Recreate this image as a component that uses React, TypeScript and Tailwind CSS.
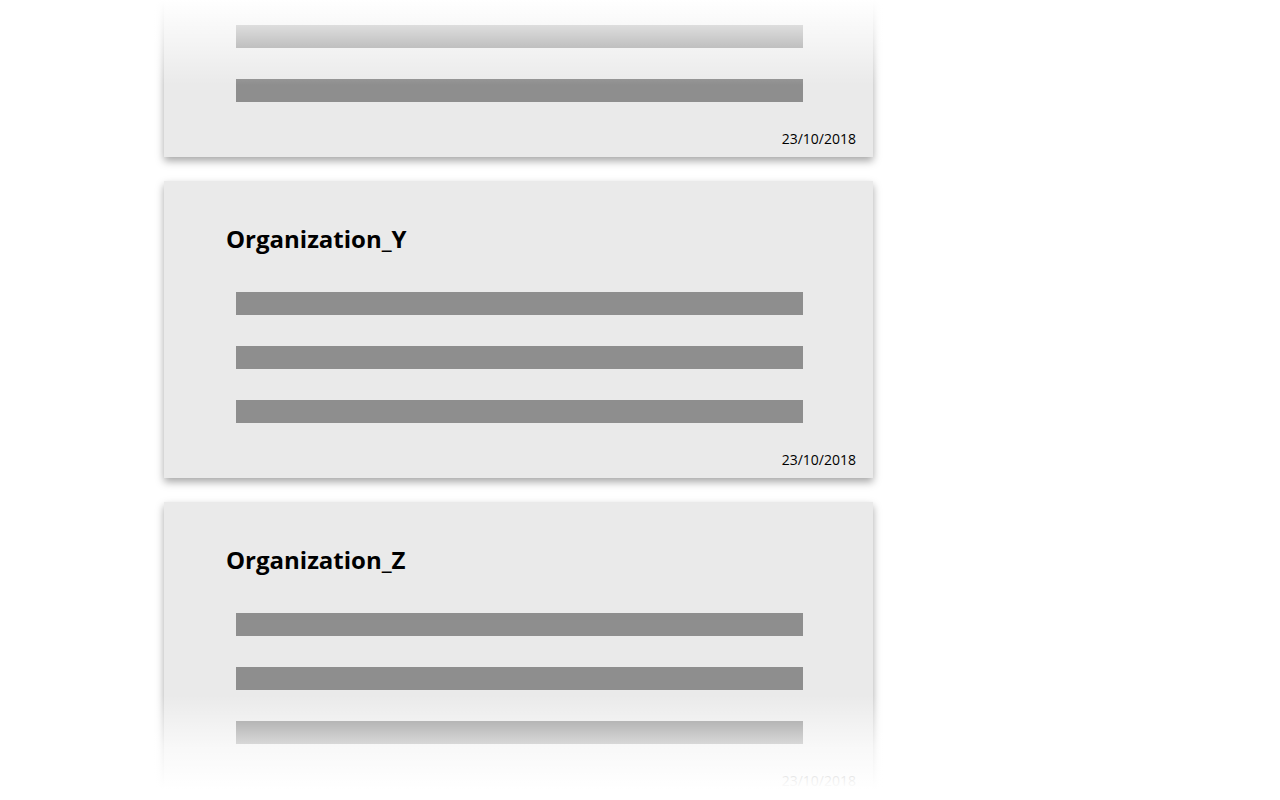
import React from "react";

interface Post {
  org: string;
  date: string;
  lines: number;
}

const posts: Post[] = [
  { org: "Organization_X", date: "23/10/2018", lines: 3 },
  { org: "Organization_Y", date: "23/10/2018", lines: 3 },
  { org: "Organization_Z", date: "23/10/2018", lines: 3 },
];

function PostCard({ post }: { post: Post }) {
  return (
    <div className="bg-[#eaeaea] pt-[42px] pb-[8px] shadow-[0_4px_8px_rgba(0,0,0,0.35)]">
      <h2 className="pl-[62px] text-[24px] leading-[31px] font-bold text-black">{post.org}</h2>

      {/* placeholder text lines */}
      <div className="mt-[38px] flex flex-col gap-[31px] pl-[72px] pr-[70px]">
        {Array.from({ length: post.lines }).map((_, i) => (
          <div key={i} className="h-[23px] bg-[#8e8e8e]" />
        ))}
      </div>

      <div className="mt-[27px] pr-[17px] text-right text-[14px] leading-[20px] text-black">
        {post.date}
      </div>
    </div>
  );
}

export default function App() {
  return (
    <div
      className="relative h-[800px] w-[1280px] overflow-hidden bg-white"
      style={{ fontFamily: '"Open Sans", "Noto Sans", sans-serif' }}
    >
      {/* feed, scrolled part-way */}
      <div className="ml-[164px] -mt-[140px] flex w-[709px] flex-col gap-[24px]">
        {posts.map((p) => (
          <PostCard key={p.org} post={p} />
        ))}
      </div>

      {/* fade overlays at the top and bottom of the feed */}
      <div className="pointer-events-none absolute inset-x-0 top-0 h-[85px] bg-gradient-to-b from-white via-white/55 via-45% to-transparent" />
      <div className="pointer-events-none absolute inset-x-0 bottom-0 h-[105px] bg-gradient-to-t from-white from-10% via-white/70 via-50% to-transparent" />
    </div>
  );
}
